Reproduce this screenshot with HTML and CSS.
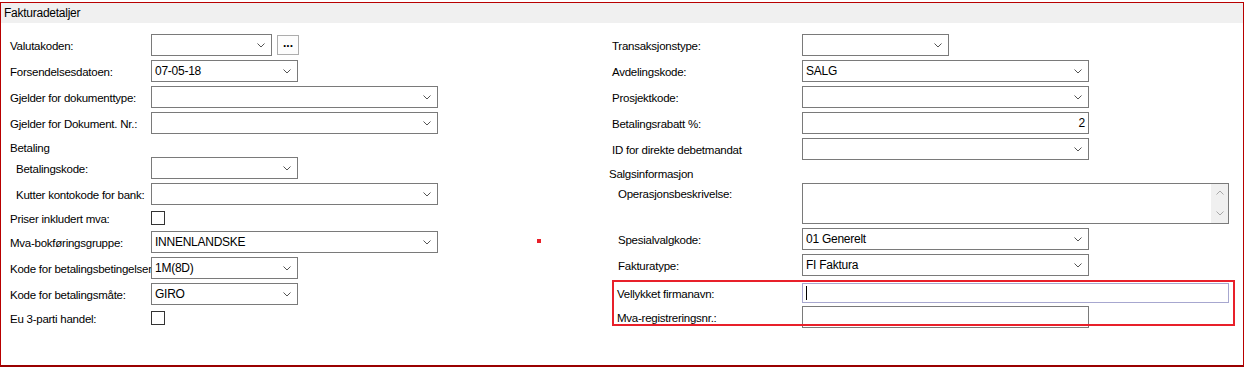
FILE: index.html
```html
<!doctype html>
<html>
    <head>
        <meta charset="utf-8">
        <title>Fakturadetaljer</title>
        <link rel="stylesheet" href="styles.css">
    </head>
    <body>
        <div class="frame">
            <div class="caption">Fakturadetaljer</div>
            <div class="panel">
                <div class="col left">
                    <div class="row">
                        <label class="lbl">Valutakoden:</label>
                        <div class="select tiny"><span class="val"></span><svg class="chev" width="8" height="5" viewBox="0 0 8 5"><path d="M0.5 0.5 L4 4 L7.5 0.5"/></svg></div>
                        <button class="more">...</button>
                    </div>
                    <div class="row">
                        <label class="lbl">Forsendelsesdatoen:</label>
                        <div class="select short"><span class="val">07-05-18</span><svg class="chev" width="8" height="5" viewBox="0 0 8 5"><path d="M0.5 0.5 L4 4 L7.5 0.5"/></svg></div>
                    </div>
                    <div class="row">
                        <label class="lbl">Gjelder for dokumenttype:</label>
                        <div class="select wide"><span class="val"></span><svg class="chev" width="8" height="5" viewBox="0 0 8 5"><path d="M0.5 0.5 L4 4 L7.5 0.5"/></svg></div>
                    </div>
                    <div class="row">
                        <label class="lbl">Gjelder for Dokument. Nr.:</label>
                        <div class="select wide"><span class="val"></span><svg class="chev" width="8" height="5" viewBox="0 0 8 5"><path d="M0.5 0.5 L4 4 L7.5 0.5"/></svg></div>
                    </div>
                    <div class="group">Betaling</div>
                    <div class="row sub">
                        <label class="lbl">Betalingskode:</label>
                        <div class="select short"><span class="val"></span><svg class="chev" width="8" height="5" viewBox="0 0 8 5"><path d="M0.5 0.5 L4 4 L7.5 0.5"/></svg></div>
                    </div>
                    <div class="row sub">
                        <label class="lbl">Kutter kontokode for bank:</label>
                        <div class="select wide"><span class="val"></span><svg class="chev" width="8" height="5" viewBox="0 0 8 5"><path d="M0.5 0.5 L4 4 L7.5 0.5"/></svg></div>
                    </div>
                    <div class="row check">
                        <label class="lbl">Priser inkludert mva:</label>
                        <span class="box"></span>
                    </div>
                    <div class="row">
                        <label class="lbl">Mva-bokføringsgruppe:</label>
                        <div class="select wide"><span class="val">INNENLANDSKE</span><svg class="chev" width="8" height="5" viewBox="0 0 8 5"><path d="M0.5 0.5 L4 4 L7.5 0.5"/></svg></div>
                    </div>
                    <div class="row">
                        <label class="lbl tight">Kode for betalingsbetingelser</label>
                        <div class="select short"><span class="val">1M(8D)</span><svg class="chev" width="8" height="5" viewBox="0 0 8 5"><path d="M0.5 0.5 L4 4 L7.5 0.5"/></svg></div>
                    </div>
                    <div class="row">
                        <label class="lbl">Kode for betalingsmåte:</label>
                        <div class="select short"><span class="val">GIRO</span><svg class="chev" width="8" height="5" viewBox="0 0 8 5"><path d="M0.5 0.5 L4 4 L7.5 0.5"/></svg></div>
                    </div>
                    <div class="row check">
                        <label class="lbl">Eu 3-parti handel:</label>
                        <span class="box"></span>
                    </div>
                </div>

                <div class="col right">
                    <div class="row">
                        <label class="lbl">Transaksjonstype:</label>
                        <div class="select short"><span class="val"></span><svg class="chev" width="8" height="5" viewBox="0 0 8 5"><path d="M0.5 0.5 L4 4 L7.5 0.5"/></svg></div>
                    </div>
                    <div class="row">
                        <label class="lbl">Avdelingskode:</label>
                        <div class="select wide"><span class="val">SALG</span><svg class="chev" width="8" height="5" viewBox="0 0 8 5"><path d="M0.5 0.5 L4 4 L7.5 0.5"/></svg></div>
                    </div>
                    <div class="row">
                        <label class="lbl">Prosjektkode:</label>
                        <div class="select wide"><span class="val"></span><svg class="chev" width="8" height="5" viewBox="0 0 8 5"><path d="M0.5 0.5 L4 4 L7.5 0.5"/></svg></div>
                    </div>
                    <div class="row">
                        <label class="lbl">Betalingsrabatt %:</label>
                        <div class="input wide num">2</div>
                    </div>
                    <div class="row">
                        <label class="lbl">ID for direkte debetmandat</label>
                        <div class="select wide"><span class="val"></span><svg class="chev" width="8" height="5" viewBox="0 0 8 5"><path d="M0.5 0.5 L4 4 L7.5 0.5"/></svg></div>
                    </div>
                    <div class="group">Salgsinformasjon</div>
                    <div class="row sub memo-row">
                        <label class="lbl">Operasjonsbeskrivelse:</label>
                        <div class="memo">
                            <div class="scroll">
                                <svg width="8" height="5" viewBox="0 0 8 5"><path d="M0.5 4.5 L4 1 L7.5 4.5"/></svg>
                                <svg width="8" height="5" viewBox="0 0 8 5"><path d="M0.5 0.5 L4 4 L7.5 0.5"/></svg>
                            </div>
                        </div>
                    </div>
                    <div class="row sub">
                        <label class="lbl">Spesialvalgkode:</label>
                        <div class="select wide"><span class="val">01 Generelt</span><svg class="chev" width="8" height="5" viewBox="0 0 8 5"><path d="M0.5 0.5 L4 4 L7.5 0.5"/></svg></div>
                    </div>
                    <div class="row sub">
                        <label class="lbl">Fakturatype:</label>
                        <div class="select wide"><span class="val">FI Faktura</span><svg class="chev" width="8" height="5" viewBox="0 0 8 5"><path d="M0.5 0.5 L4 4 L7.5 0.5"/></svg></div>
                    </div>
                    <div class="highlight">
                        <div class="row firm">
                            <label class="lbl">Vellykket firmanavn:</label>
                            <div class="input full focus"><span class="caret"></span></div>
                        </div>
                        <div class="row">
                            <label class="lbl">Mva-registreringsnr.:</label>
                            <div class="input wide"></div>
                        </div>
                    </div>
                </div>
            </div>
            <span class="marker"></span>
        </div>
    </body>
</html>
```

FILE: styles.css
```css
html,
body {
    margin: 0;
    padding: 0;
    background-color: #fff;
}

* {
    font-family: "Liberation Sans", Arial, sans-serif;
    box-sizing: border-box;
}

.frame {
    position: relative;
    margin-top: 2px;
    width: 1244px;
    height: 365px;
    border: 1px solid #b80000;
    border-bottom: 2px solid #9a0000;
    font-size: 11.5px;
    letter-spacing: -0.25px;
    color: #000;
}

.caption {
    height: 20px;
    line-height: 20px;
    padding-left: 3px;
    background-color: #f0f0f0;
    font-size: 12px;
}

.panel {
    display: grid;
    grid-template-columns: 602px 1fr;
    padding: 11px 0 0 9px;
}

.row {
    display: flex;
    align-items: center;
    height: 22px;
    margin-bottom: 4px;
    white-space: nowrap;
}

.row.check {
    height: 18px;
}

.lbl {
    flex: none;
    width: 141px;
    padding-top: 1px;
}

.lbl.tight {
    margin-right: -3px;
    width: 144px;
}

.right .lbl {
    width: 190px;
}

.sub .lbl {
    padding-left: 6px;
}

.group {
    height: 19px;
    line-height: 21px;
}

.right .group {
    margin-left: -3px;
}

.select,
.input {
    display: flex;
    align-items: center;
    justify-content: space-between;
    height: 22px;
    border: 1px solid #7a7a7a;
    padding: 0 6px 0 3px;
    background-color: #fff;
    font-size: 12px;
}

.tiny { width: 121px; }
.short { width: 147px; }
.wide { width: 287px; }
.full { width: 427px; }

.chev path,
.scroll path {
    fill: none;
    stroke: #555;
    stroke-width: 1;
}

.more {
    width: 22px;
    height: 20px;
    margin-left: 5px;
    padding: 0 0 4px;
    border: 1px solid #adadad;
    background-color: #fdfdfd;
    font-size: 12px;
    font-weight: bold;
    line-height: 12px;
    letter-spacing: 0;
}

.box {
    width: 14px;
    height: 14px;
    border: 1px solid #333;
    background-color: #fff;
}

.num {
    justify-content: flex-end;
    padding-right: 3px;
}

.memo-row {
    align-items: flex-start;
    height: 41px;
}

.memo-row .lbl {
    padding-top: 5px;
}

.memo {
    display: flex;
    justify-content: flex-end;
    width: 427px;
    height: 41px;
    border: 1px solid #7a7a7a;
}

.scroll {
    display: flex;
    flex-direction: column;
    justify-content: space-between;
    align-items: center;
    width: 17px;
    padding: 6px 0 7px;
    background-color: #f0f0f0;
}

.scroll path {
    stroke: #a8a8a8;
}

.highlight {
    position: relative;
    width: 623px;
    height: 46px;
    padding: 3px 0 0 5px;
}

.highlight::after {
    content: "";
    position: absolute;
    top: 0;
    left: 0;
    right: 0;
    bottom: 0;
    border: 2px solid #e8202a;
    pointer-events: none;
}

.highlight .lbl {
    width: 185px;
}

.firm {
    height: 20px;
    margin-bottom: 3px;
}

.firm .input {
    height: 20px;
}

.focus {
    border-color: #a7a7cf;
}

.caret {
    width: 1px;
    height: 14px;
    background-color: #000;
}

.marker {
    position: absolute;
    left: 536px;
    top: 236px;
    width: 4px;
    height: 4px;
    background-color: #e8202a;
}
```
